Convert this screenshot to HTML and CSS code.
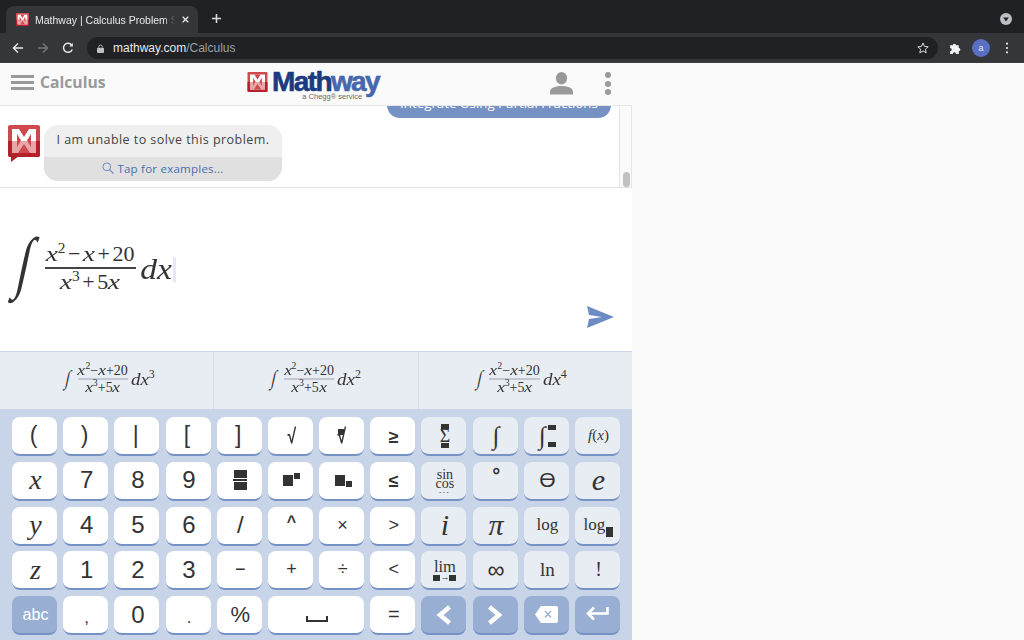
FILE: index.html
```html
<!DOCTYPE html>
<html>
<head>
  <title>Mathway | Calculus Problem Solver</title>
  <link rel="stylesheet" href="styles.css">
</head>
<body>
  <!-- logo mark, used in the tab, the header and the chat -->
  <svg class="defs">
    <symbol id="mark" viewBox="0 0 32 32">
      <rect width="32" height="32" rx="2" fill="#cf4a4e"/>
      <path d="M0 16h32v14a2 2 0 0 1-2 2H2a2 2 0 0 1-2-2z" fill="#b5202a"/>
      <rect x="4" y="4" width="24" height="24" fill="#fff"/>
      <path d="M4 16h24v12H4z" fill="#e9a6a8"/>
      <path d="M11 4h10l-5 8zM9 9v13l4-6.500zM23 9v13l-4-6.500zM10 28h12l-6-9z" fill="#cf4a4e"/>
    </symbol>
  </svg>

  <!-- browser chrome -->
  <div class="tabstrip">
    <div class="tab">
      <svg class="favicon"><use href="#mark"/></svg>
      <span class="tab-title">Mathway | Calculus Problem Solver</span>
      <svg class="tab-close" viewBox="0 0 10 10"><path d="M1 1l8 8M9 1l-8 8" stroke="#e8eaed" stroke-width="1.800"/></svg>
    </div>
    <svg class="new-tab" viewBox="0 0 12 12"><path d="M6 1v10M1 6h10" stroke="#dadce0" stroke-width="1.700"/></svg>
    <svg class="tab-search" viewBox="0 0 12 12"><circle cx="6" cy="6" r="6" fill="#bdc1c6"/><path d="M3.200 4.600h5.600L6 8.600z" fill="#202124"/></svg>
  </div>
  <div class="toolbar">
    <svg class="nav-icon" viewBox="0 0 12 12"><path d="M11 6H1.600M6 1.400 1.400 6 6 10.600" fill="none" stroke="#e8eaed" stroke-width="1.400"/></svg>
    <svg class="nav-icon" viewBox="0 0 12 12"><path d="M1 6h9.400M6 1.400 10.600 6 6 10.600" fill="none" stroke="#75777b" stroke-width="1.400"/></svg>
    <svg class="nav-icon" viewBox="0 0 12 12"><path d="M10.200 7.400A4.500 4.500 0 1 1 9.600 3" fill="none" stroke="#e8eaed" stroke-width="1.400"/><path d="M10.900 1v3.600H7.300z" fill="#e8eaed"/></svg>
    <div class="urlbar">
      <svg class="lock" viewBox="0 0 8 10"><path d="M2 4V3a2 2 0 0 1 4 0v1" fill="none" stroke="#bdc1c6"/><rect y="4" width="8" height="6" rx="1" fill="#bdc1c6"/></svg>
      <span class="url">mathway.com<span class="url-path">/Calculus</span></span>
      <svg class="star" viewBox="0 0 12 12"><path d="M6 1l1.500 3.400 3.700.4-2.800 2.400.8 3.600L6 9l-3.200 1.800.8-3.600L.8 4.800l3.700-.4z" fill="none" stroke="#d7d9dc"/></svg>
    </div>
    <svg class="puzzle" viewBox="0 0 12 12"><path d="M1 3h2.500a1.500 1.500 0 1 1 3 0H9v2.500a1.500 1.500 0 1 1 0 3V11H6.500a1.500 1.500 0 1 0-3 0H1V8.500a1.500 1.500 0 1 0 0-3z" fill="#f1f3f4"/></svg>
    <span class="avatar">a</span>
    <svg class="menu-dots" viewBox="0 0 4 14"><circle cx="2" cy="2" r="1.300" fill="#e8eaed"/><circle cx="2" cy="7" r="1.300" fill="#e8eaed"/><circle cx="2" cy="12" r="1.300" fill="#e8eaed"/></svg>
  </div>

  <div class="page">
    <div class="app">
      <div class="header">
        <div class="header-left">
          <div class="hamburger"><i></i><i></i><i></i></div>
          <span class="subject">Calculus</span>
        </div>
        <div class="logo">
          <svg class="logo-mark"><use href="#mark"/></svg>
          <div class="logo-words">
            <span class="logo-name">Math<span class="logo-way">way</span></span>
            <span class="logo-sub">a Chegg® service</span>
          </div>
        </div>
        <div class="header-right">
          <svg class="user" viewBox="0 0 24 24"><ellipse cx="12" cy="6.500" rx="5.800" ry="6.500" fill="#999"/><path d="M0 23.500v-3C0 16 7 14.500 12 14.500s12 1.500 12 6v3z" fill="#999"/></svg>
          <div class="more"><i></i><i></i><i></i></div>
        </div>
      </div>

      <div class="chat">
        <div class="chat-scroll">
          <button class="reply-btn">Integrate Using Partial Fractions</button>
          <div class="message">
            <svg class="chat-mark" viewBox="0 0 32 37"><use href="#mark" width="32" height="32"/><path d="M3 31h8l-8 6z" fill="#b5202a"/></svg>
            <div class="bubble">
              <div class="bubble-text">I am unable to solve this problem.</div>
              <div class="bubble-link">
                <svg class="search" viewBox="0 0 12 12"><circle cx="4.800" cy="4.800" r="3.900" fill="none" stroke="#6f8cc4" stroke-width="1"/><path d="M7.600 7.600l3.900 3.900" stroke="#6f8cc4" stroke-width="1.200"/></svg>
                Tap for examples...
              </div>
            </div>
          </div>
        </div>
        <div class="scrollbar"><div class="thumb"></div></div>
      </div>

      <div class="editor">
        <div class="math math-big">
          <span class="int">∫</span>
          <span class="frac">
            <span class="num"><em>x</em><sup>2</sup><span class="op">−</span><em>x</em><span class="op">+</span>20</span>
            <span class="den"><em>x</em><sup>3</sup><span class="op">+</span>5<em>x</em></span>
          </span>
          <span class="dx"><em>dx</em></span><span class="cursor"></span>
        </div>
        <svg class="send" viewBox="0 0 27 22"><path d="M0 0l27 11L0 22l2-9 13-2-13-2z" fill="#6e8cc4"/></svg>
      </div>

      <div class="suggestions">
        <div class="suggestion">
          <div class="math math-small">
            <span class="int">∫</span>
            <span class="frac"><span class="num"><em>x</em><sup>2</sup>−<em>x</em>+20</span><span class="den"><em>x</em><sup>3</sup>+5<em>x</em></span></span>
            <span class="dx"><em>dx</em><sup>3</sup></span>
          </div>
        </div>
        <div class="suggestion">
          <div class="math math-small">
            <span class="int">∫</span>
            <span class="frac"><span class="num"><em>x</em><sup>2</sup>−<em>x</em>+20</span><span class="den"><em>x</em><sup>3</sup>+5<em>x</em></span></span>
            <span class="dx"><em>dx</em><sup>2</sup></span>
          </div>
        </div>
        <div class="suggestion">
          <div class="math math-small">
            <span class="int">∫</span>
            <span class="frac"><span class="num"><em>x</em><sup>2</sup>−<em>x</em>+20</span><span class="den"><em>x</em><sup>3</sup>+5<em>x</em></span></span>
            <span class="dx"><em>dx</em><sup>4</sup></span>
          </div>
        </div>
      </div>

      <div class="keypad">
        <!-- row 1 -->
        <button class="key key-paren">(</button>
        <button class="key key-paren">)</button>
        <button class="key key-paren">|</button>
        <button class="key key-paren">[</button>
        <button class="key key-paren">]</button>
        <button class="key key-sym"><span class="root">√</span></button>
        <button class="key key-sym"><i class="box box-s box-index"></i><span class="root">√</span></button>
        <button class="key key-op key-ineq">≥</button>
        <button class="key alt key-stack"><i class="box box-w"></i><span class="sigma">Σ</span><i class="box box-w"></i></button>
        <button class="key alt key-int">∫</button>
        <button class="key alt key-defint"><span class="key-int">∫</span><span class="limits"><i class="box box-w"></i><i class="box box-w"></i></span></button>
        <button class="key alt key-serif key-fx"><em>f</em>(<em>x</em>)</button>
        <!-- row 2 -->
        <button class="key key-var"><em>x</em></button>
        <button class="key">7</button>
        <button class="key">8</button>
        <button class="key">9</button>
        <button class="key key-stack"><i class="box box-f"></i><i class="rule"></i><i class="box box-f"></i></button>
        <button class="key key-pow"><i class="box box-m"></i><i class="box box-s box-up"></i></button>
        <button class="key key-pow"><i class="box box-m"></i><i class="box box-s box-down"></i></button>
        <button class="key key-op key-ineq">≤</button>
        <button class="key alt key-serif key-trig">sin<br>cos<span class="trig-dots">•••</span></button>
        <button class="key alt key-deg">°</button>
        <button class="key alt key-theta">ϴ</button>
        <button class="key alt key-var key-e"><em>e</em></button>
        <!-- row 3 -->
        <button class="key key-var"><em>y</em></button>
        <button class="key">4</button>
        <button class="key">5</button>
        <button class="key">6</button>
        <button class="key">/</button>
        <button class="key key-caret">^</button>
        <button class="key key-op">×</button>
        <button class="key key-op">&gt;</button>
        <button class="key alt key-var key-e"><em>i</em></button>
        <button class="key alt key-var key-pi"><em>π</em></button>
        <button class="key alt key-serif key-log">log</button>
        <button class="key alt key-serif key-log">log<i class="box box-base"></i></button>
        <!-- row 4 -->
        <button class="key key-var"><em>z</em></button>
        <button class="key">1</button>
        <button class="key">2</button>
        <button class="key">3</button>
        <button class="key key-op">−</button>
        <button class="key key-op">+</button>
        <button class="key key-op">÷</button>
        <button class="key key-op">&lt;</button>
        <button class="key alt key-serif key-lim">lim<span class="lim-to"><i class="box box-l"></i>→<i class="box box-l"></i></span></button>
        <button class="key alt key-inf">∞</button>
        <button class="key alt key-serif key-ln">ln</button>
        <button class="key alt key-serif">!</button>
        <!-- row 5 -->
        <button class="key action key-abc">abc</button>
        <button class="key key-low">,</button>
        <button class="key">0</button>
        <button class="key key-low">.</button>
        <button class="key key-pct">%</button>
        <button class="key key-space"><svg viewBox="0 0 22 6"><path d="M1 0v5h20V0" fill="none" stroke="#333" stroke-width="2"/></svg></button>
        <button class="key key-eq">=</button>
        <button class="key action key-icon"><svg class="action-icon" viewBox="0 0 16 20"><path d="M13.500 2 4 10l9.500 8" fill="none" stroke="#fff" stroke-width="4.500"/></svg></button>
        <button class="key action key-icon"><svg class="action-icon" viewBox="0 0 16 20"><path d="M2.500 2 12 10l-9.500 8" fill="none" stroke="#fff" stroke-width="4.500"/></svg></button>
        <button class="key action key-icon"><svg class="action-wide" viewBox="0 0 23 17"><path d="M6 0h15a2 2 0 0 1 2 2v13a2 2 0 0 1-2 2H6l-6-8.500z" fill="#fff"/><path d="M10 5l6 6.500M16 5l-6 6.500" stroke="#98aed2" stroke-width="1.300"/></svg></button>
        <button class="key action key-icon"><svg class="action-wide" viewBox="0 0 23 17"><path d="M21.500 1v6.500H4" fill="none" stroke="#fff" stroke-width="2.600"/><path d="M8 1.500 2 7.500l6 6" fill="none" stroke="#fff" stroke-width="2.600"/></svg></button>
      </div>
    </div>
  </div>
</body>
</html>
```

FILE: styles.css
```css
* {
  box-sizing: border-box;
}

html,
body {
  height: 100%;
}

body {
  margin: 0;
  overflow: hidden;
  background-color: #fafafa;
  font-family: "Liberation Sans", Arial, sans-serif;
}

.defs {
  display: none;
}

/* browser chrome */
.tabstrip {
  display: flex;
  align-items: flex-end;
  height: 33px;
  background-color: #202124;
}

.tab {
  display: flex;
  align-items: center;
  width: 192px;
  height: 27px;
  margin-left: 6px;
  padding: 0 9px 0 10px;
  border-radius: 8px 8px 0 0;
  background-color: #35363a;
}

.favicon {
  flex: none;
  width: 13px;
  height: 13px;
  margin-right: 6px;
}

.tab-title {
  flex: 1;
  overflow: hidden;
  white-space: nowrap;
  color: #e8eaed;
  font-size: 10.500px;
  -webkit-mask-image: linear-gradient(to right, #000 92%, transparent);
  mask-image: linear-gradient(to right, #000 92%, transparent);
}

.tab-close {
  flex: none;
  width: 7px;
  height: 7px;
  margin-left: 7px;
}

.new-tab {
  flex: none;
  width: 11px;
  height: 11px;
  margin: 0 0 9px 13px;
}

.tab-search {
  flex: none;
  width: 12px;
  height: 12px;
  margin: 0 12px 8px auto;
}

.toolbar {
  display: flex;
  align-items: center;
  height: 30px;
  padding: 1px 15px 0 12px;
  border-bottom: 1px solid #3c3d41;
  background-color: #35363a;
}

.nav-icon {
  flex: none;
  width: 12px;
  height: 12px;
  margin-right: 13px;
}

.urlbar {
  display: flex;
  flex: 1;
  align-items: center;
  height: 22px;
  margin-right: 11px;
  padding: 0 9px 0 10px;
  border-radius: 11px;
  background-color: #202124;
}

.lock {
  flex: none;
  width: 7px;
  height: 9px;
  margin-right: 9px;
}

.url {
  flex: 1;
  color: #e8eaed;
  font-size: 12px;
}

.url-path {
  color: #9aa0a6;
}

.star {
  flex: none;
  width: 12px;
  height: 12px;
}

.puzzle {
  flex: none;
  width: 13px;
  height: 13px;
}

.avatar {
  flex: none;
  width: 18px;
  height: 18px;
  margin: 0 15px 0 10px;
  border-radius: 50%;
  background-color: #5a6fc4;
  color: #e8eaed;
  font-size: 9px;
  line-height: 18px;
  text-align: center;
}

.menu-dots {
  flex: none;
  width: 4px;
  height: 12px;
}

/* app */
.page {
  height: calc(100% - 63px);
}

.app {
  display: flex;
  flex-direction: column;
  width: 632px;
  height: 100%;
}

.header {
  display: flex;
  flex: none;
  align-items: center;
  height: 43px;
  padding: 0 21px 3px 11px;
  border-bottom: 1px solid #e6e6e6;
  background-color: #fafafa;
}

.header-left {
  display: flex;
  flex: none;
  align-items: center;
  width: 190px;
}

.hamburger {
  display: flex;
  flex-direction: column;
  gap: 3px;
  width: 23px;
  margin-right: 6px;
}

.hamburger i {
  height: 3px;
  background-color: #999;
}

.subject {
  margin-bottom: 2px;
  color: #999;
  font-family: "Open Sans", sans-serif;
  font-size: 15.700px;
  font-weight: 700;
}

.logo {
  display: flex;
  align-items: flex-start;
  margin-left: 46px;
}

.logo-mark {
  width: 21px;
  height: 20px;
  margin: 7px 4px 0 0;
}

.logo-words {
  display: flex;
  flex-direction: column;
  margin-top: 2px;
}

.logo-name {
  color: #1b3a80;
  font-family: "Liberation Sans", sans-serif;
  font-size: 28px;
  font-weight: 700;
  line-height: 29px;
  letter-spacing: -1.600px;
  -webkit-text-stroke: .6px currentColor;
}

.logo-way {
  color: #4667ac;
}

.logo-sub {
  align-self: flex-end;
  margin: -3px 17px 0 0;
  color: #666;
  font-size: 7.500px;
  line-height: 8px;
}

.header-right {
  display: flex;
  align-items: center;
  gap: 32px;
  margin: 2px 0 0 auto;
}

.user {
  width: 23px;
  height: 23px;
}

.more {
  display: flex;
  flex-direction: column;
  gap: 2.500px;
  width: 6px;
}

.more i {
  height: 6px;
  border-radius: 50%;
  background-color: #999;
}

.chat {
  display: flex;
  flex: none;
  height: 82px;
  border-bottom: 1px solid #e3e3e3;
  background-color: #fff;
}

.chat-scroll {
  display: flex;
  flex: 1;
  flex-direction: column;
  overflow: hidden;
  padding: 0 8px;
}

.reply-btn {
  flex: none;
  align-self: flex-end;
  width: 224px;
  height: 26px;
  margin: -14px 0 7px 0;
  padding: 0 0 4px;
  border: none;
  border-radius: 13px;
  background-color: #7691c4;
  color: #fff;
  font-family: "Open Sans", sans-serif;
  font-size: 13.300px;
}

.message {
  display: flex;
  flex: none;
  align-items: flex-start;
}

.chat-mark {
  flex: none;
  width: 32px;
  height: 37px;
  margin-right: 4px;
}

.bubble {
  width: 238px;
  overflow: hidden;
  border-radius: 14px;
  background-color: #efefef;
  color: #444;
  font-family: "Open Sans", sans-serif;
  font-size: 12.500px;
  letter-spacing: .45px;
  text-align: center;
}

.bubble-text {
  height: 32px;
  line-height: 29px;
}

.bubble-link {
  display: flex;
  align-items: center;
  justify-content: center;
  height: 24px;
  padding-bottom: 2px;
  background-color: #e0e0e0;
  color: #4a6cae;
  font-size: 11.500px;
  letter-spacing: .24px;
}

.search {
  width: 12px;
  height: 12px;
  margin-right: 3px;
}

.scrollbar {
  flex: none;
  position: relative;
  width: 13px;
  border-left: 1px solid #e6e6e6;
  border-right: 1px solid #e6e6e6;
  background-color: #fafafa;
}

.thumb {
  position: absolute;
  right: 1px;
  bottom: 0;
  width: 7px;
  height: 15px;
  border-radius: 4px;
  background-color: #c1c1c1;
}

/* math */
.math {
  display: inline-flex;
  align-items: center;
  color: #333;
  font-family: "Liberation Serif", serif;
}

.math sup {
  font-size: 70%;
  line-height: 0;
}

.math em {
  display: inline-block;
  margin: 0 .055em;
  transform: scaleX(1.25);
}

.math .dx em {
  margin: 0 .057em;
  transform: scaleX(1.120);
}

.frac {
  display: inline-flex;
  flex-direction: column;
  align-items: center;
}

.num {
  white-space: nowrap;
  border-bottom: 2px solid #444;
}

.den {
  white-space: nowrap;
}

.editor {
  display: flex;
  flex: none;
  align-items: center;
  justify-content: space-between;
  height: 163px;
  padding: 0 18px 0 16px;
  background-color: #fff;
}

.math-big .int {
  font-size: 68px;
  line-height: 70px;
  transform: translateY(-8px) skewX(-12deg) scaleX(.7);
}

.math-big .frac {
  margin: 0 5px 0 10px;
  font-size: 22px;
}

.math-big .num {
  padding: 0 1px 3px;
  line-height: 20px;
}

.math-big .den {
  line-height: 26px;
}

.math-big .op {
  margin: 0 2.500px;
}

.math-big .dx {
  margin-top: -2px;
  font-size: 30px;
}

.cursor {
  width: 3px;
  height: 25px;
  margin-left: 1px;
  background-color: #e6e9f5;
}

.send {
  align-self: flex-end;
  width: 27px;
  height: 22px;
  margin-bottom: 23px;
}

.suggestions {
  display: grid;
  flex: none;
  grid-template-columns: repeat(3, 1fr);
  height: 59px;
  padding: 0 8px 0 7px;
  border-top: 1px solid #c8d4e8;
  border-bottom: 1px solid #c8d4e8;
  background-color: #e8edf4;
}

.suggestion {
  display: flex;
  align-items: center;
  justify-content: center;
  padding-bottom: 2px;
  border-left: 1px solid #d3dbe9;
}

.suggestion:first-child {
  border-left: none;
}

.math-small .int {
  font-size: 21px;
  line-height: 24px;
  transform: translateY(-2px) skewX(-12deg) scaleX(.7);
}

.math-small .frac {
  margin: 0 3px 0 7px;
  font-size: 14px;
}

.math-small .num {
  padding-bottom: 1px;
  border-bottom-color: #c1c8d4;
  line-height: 13px;
}

.math-small .den {
  line-height: 16px;
}

.math-small .dx {
  font-size: 17px;
}

/* keypad */
.keypad {
  display: grid;
  flex: 1;
  grid-template-columns: repeat(12, 1fr);
  grid-auto-rows: 39px;
  gap: 5.750px 6.180px;
  padding: 7px 12px 0;
  background-color: #c8d4e8;
}

.key {
  display: flex;
  align-items: center;
  justify-content: center;
  min-width: 0;
  padding: 0 0 0 2px;
  border: none;
  border-bottom: 2px solid #7691c4;
  border-radius: 8px;
  background-color: #fff;
  color: #333;
  font-family: "Liberation Sans", sans-serif;
  font-size: 24px;
}

.key.alt {
  background-color: #e8edf4;
}

.key.action {
  background-color: #98aed2;
  color: #fff;
}

.key-icon {
  padding-left: 0;
}

.box {
  display: block;
  background-color: #333;
}

.box-w {
  width: 8px;
  height: 5px;
}

.box-f {
  width: 13px;
  height: 8px;
}

.box-m {
  width: 10px;
  height: 11px;
}

.box-s {
  width: 6px;
  height: 6px;
}

.box-l {
  display: inline-block;
  width: 7px;
  height: 6px;
}

.rule {
  display: block;
  width: 14px;
  height: 2px;
  margin: 1px 0;
  background-color: #333;
}

.key-stack {
  flex-direction: column;
}

.key-paren {
  padding: 0 2px 0 0;
  font-size: 23px;
}

.key-sym {
  font-size: 21px;
  font-weight: 700;
}

.root {
  display: inline-block;
  transform: scaleX(.75);
}

.box-index {
  margin: -8px -8px 0 0;
}

.key-op {
  font-size: 18px;
}

.key-ineq {
  padding-top: 3px;
  font-weight: 700;
}

.key-var {
  font-family: "Liberation Serif", serif;
  font-size: 28px;
}

.key-serif {
  font-family: "Liberation Serif", serif;
  font-size: 20px;
}

.sigma {
  margin: -1px 0;
  font-family: "Liberation Serif", serif;
  font-size: 18px;
  line-height: 16px;
}

.key-int {
  font-size: 25px;
  font-family: "Liberation Serif", serif;
}

.key-defint {
  gap: 2px;
}

.limits {
  display: flex;
  flex-direction: column;
  gap: 12px;
}

.key-fx {
  font-size: 15px;
}

.key-pow {
  padding-left: 3px;
}

.box-up {
  margin: -8px 0 0 1px;
}

.box-down {
  margin: 8px 0 0 1px;
}

.key-trig {
  display: block;
  padding-top: 4px;
  font-size: 14px;
  line-height: 9px;
}

.trig-dots {
  display: block;
  margin-top: 2px;
  font-size: 5px;
  line-height: 5px;
  letter-spacing: 2px;
}

.key-deg {
  padding-bottom: 10px;
  font-size: 20px;
  font-weight: 700;
}

.key-theta {
  font-size: 21px;
}

.key-e {
  font-size: 30px;
}

.key-pi {
  font-size: 30px;
}

.key-log {
  font-size: 17px;
}

.key-ln {
  font-size: 19px;
}

.box-base {
  width: 7px;
  height: 10px;
  margin: 14px 0 0 1px;
}

.key-lim {
  display: block;
  padding-top: 2px;
  font-size: 16.500px;
  line-height: 14px;
}

.lim-to {
  display: flex;
  align-items: center;
  justify-content: center;
  font-family: "Liberation Sans", sans-serif;
  font-size: 9px;
  line-height: 7px;
}

.key-inf {
  font-size: 24px;
}

.key-low {
  padding-top: 6px;
  font-size: 17px;
}

.key-pct {
  font-size: 22px;
}

.key-caret {
  padding-bottom: 6px;
  font-size: 16px;
  font-weight: 700;
}

.key-abc {
  font-size: 16px;
}

.key-space {
  grid-column: span 2;
  padding-top: 8px;
}

.key-space svg {
  width: 22px;
  height: 6px;
}

.key-eq {
  font-size: 20px;
}

.action-icon {
  width: 16px;
  height: 20px;
}

.action-wide {
  width: 23px;
  height: 17px;
}
```
